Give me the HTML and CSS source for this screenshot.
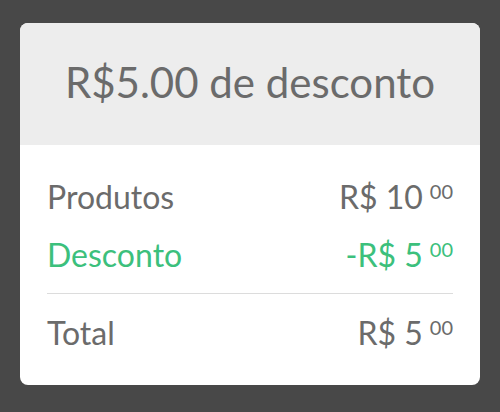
FILE: index.html
```html
<!DOCTYPE html>
<html lang="pt">
<head>
    <meta charset="UTF-8">
    <title>Desconto</title>
    <link rel="stylesheet" href="styles.css">
</head>
<body>
    <div class="card">
        <div class="card-header">R$5.00 de desconto</div>
        <div class="summary">
            <div class="row">
                <span>Produtos</span>
                <span class="price">R$ 10<span class="cents">00</span></span>
            </div>
            <div class="row discount">
                <span>Desconto</span>
                <span class="price">-R$ 5<span class="cents">00</span></span>
            </div>
            <div class="divider"></div>
            <div class="row total">
                <span>Total</span>
                <span class="price">R$ 5<span class="cents">00</span></span>
            </div>
        </div>
    </div>
</body>
</html>
```

FILE: styles.css
```css
* {
    margin: 0;
    padding: 0;
    box-sizing: border-box;
}

body {
    font-family: Lato, 'Open Sans', sans-serif;
    background: #484848;
    padding: 23px 20px;
    color: #6b6b6b;
}

.card {
    background: white;
    border-radius: 8px;
    overflow: hidden;
}

.card-header {
    background: #ededed;
    height: 122px;
    display: flex;
    align-items: center;
    justify-content: center;
    font-size: 42px;
    padding-bottom: 4px;
}

.summary {
    padding: 22px 27px 24px;
}

.row {
    height: 58px;
    display: flex;
    align-items: center;
    justify-content: space-between;
    font-size: 32px;
}

.discount {
    color: #3cc07c;
}

.divider {
    height: 1px;
    background: #dcdcdc;
    margin: 10px 0 9px;
}

.price {
    display: flex;
    align-items: flex-start;
}

.cents {
    font-size: 20px;
    margin-left: 7px;
    margin-top: 2px;
}
```
